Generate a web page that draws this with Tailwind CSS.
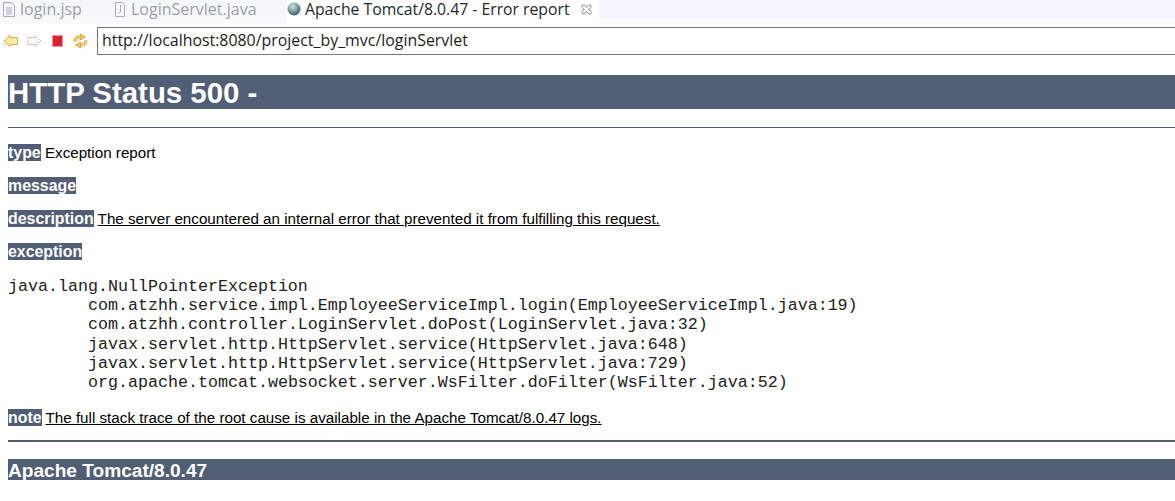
<!DOCTYPE html>
<html lang="en">
<head>
    <meta charset="UTF-8">
    <script src="https://cdn.jsdelivr.net/npm/@tailwindcss/browser@4"></script>
    <title>Apache Tomcat/8.0.47 - Error report</title>
</head>
<body class="bg-white overflow-hidden h-[501px] font-['Liberation_Sans',sans-serif] text-black">
    <!-- editor tabs -->
    <div class="h-[24px] flex bg-[#f9f9fc] font-['Open_Sans',sans-serif] text-[16px] leading-[18px] text-[#9a9fa6]">
        <div class="w-[115px] h-[18px] pl-[3px] flex items-center gap-[5px] bg-[#f5f7fd]">
            <svg width="12" height="15" viewBox="0 0 12 15" fill="none" stroke="#a9adb3"><path d="M.5 .5h8l3 3v11H.5zM3 6h6M3 8h6M3 10h6M3 12h6"/></svg>
            <span>login.jsp</span>
        </div>
        <div class="w-[172px] h-[18px] flex items-center gap-[6px] bg-[#f5f7fd]">
            <svg width="10" height="15" viewBox="0 0 10 15" fill="none" stroke="#a9adb3"><path d="M.5 .5h7l2 2v12h-9zM5.500 3v7l-2 1.500"/></svg>
            <span>LoginServlet.java</span>
        </div>
        <div class="w-[312px] h-[24px] pb-[6px] flex items-center bg-white gap-[4px] text-[#22282e]">
            <svg width="14" height="14" viewBox="0 0 14 14"><defs><radialGradient id="globe" cx=".4" cy=".3" r=".8"><stop offset="0" stop-color="#d5e0e0"/><stop offset=".55" stop-color="#6f9494"/><stop offset="1" stop-color="#2f4f55"/></radialGradient></defs><circle cx="7" cy="7" r="6.500" fill="url(#globe)"/></svg>
            <span class="w-[272px] text-[15.750px] whitespace-nowrap">Apache Tomcat/8.0.47 - Error report</span>
            <svg width="11" height="11" viewBox="0 0 10 10" fill="none" stroke="#a6a6a6"><path d="M1 1l2 0 2 2 2-2 2 0 0 2-2 2 2 2 0 2-2 0-2-2-2 2-2 0 0-2 2-2-2-2z"/></svg>
        </div>
        <div class="flex-1 h-[18px] bg-[#f3f6fe]"></div>
    </div>
    <!-- browser toolbar -->
    <div class="h-[31px] flex items-start pt-[3px] bg-white">
        <div class="w-[97px] h-[27px] flex items-center pl-[3px]">
            <svg width="16" height="14" viewBox="0 0 16 14"><path d="M1 7l6-6v2.500h7.500v7H7V13z" fill="#fbe9a6" stroke="#d9ae45"/></svg>
            <svg class="ml-[8px]" width="15" height="14" viewBox="0 0 15 14"><path d="M14 7L8 1v2.500H.8v7H8V13z" fill="#f6f7f7" stroke="#c6cbce"/></svg>
            <div class="ml-[10px] w-[11px] h-[12px] bg-[#e0212b] border border-[#e39aa0]"></div>
            <svg class="ml-[10px]" width="15" height="16" viewBox="0 0 15 15" fill="none"><path d="M2 8C2 4.500 5 3 8 3.500" stroke="#cf9b32" stroke-width="3.200"/><path d="M2 8C2 4.500 5 3 8 3.500" stroke="#f7d976" stroke-width="1.600"/><path d="M13 7c0 3.500-3 5-6 4.500" stroke="#cf9b32" stroke-width="3.200"/><path d="M13 7c0 3.500-3 5-6 4.500" stroke="#f7d976" stroke-width="1.600"/><path d="M7.500 .5l5 3-5 3zM7.500 8.500l-5 3 5 3z" fill="#f2c85a" stroke="#cf9b32" stroke-width=".7"/></svg>
        </div>
        <div class="h-[28px] flex-1 border border-[#777777] border-r-0 flex items-center pl-[4px] font-['Open_Sans',sans-serif] text-[15.900px] text-[#1c1c1c]">http://localhost:8080/project_by_mvc/loginServlet</div>
    </div>
    <!-- error page -->
    <main class="pl-[8px] pt-[20px]">
        <h1 class="bg-[#525d76] text-white font-bold text-[29.400px] leading-[36px] h-[34px]">HTTP Status 500 -</h1>
        <div class="h-px bg-[#525d76] mt-[18px]"></div>
        <p class="mt-[16px] h-[18px] leading-[18px] text-[15.200px]"><b class="bg-[#525d76] text-white text-[15.900px]">type</b> Exception report</p>
        <p class="mt-[15px] h-[18px] leading-[18px] text-[15.200px]"><b class="bg-[#525d76] text-white text-[15.900px]">message</b></p>
        <p class="mt-[15px] h-[18px] leading-[18px] text-[15.200px]"><b class="bg-[#525d76] text-white text-[15.900px]">description</b> <u>The server encountered an internal error that prevented it from fulfilling this request.</u></p>
        <p class="mt-[15px] h-[18px] leading-[18px] text-[15.200px]"><b class="bg-[#525d76] text-white text-[15.900px]">exception</b></p>
        <pre class="mt-[16px] font-['Liberation_Mono',monospace] text-[16.670px] leading-[19.200px] text-[#222222] [tab-size:8]">java.lang.NullPointerException
	com.atzhh.service.impl.EmployeeServiceImpl.login(EmployeeServiceImpl.java:19)
	com.atzhh.controller.LoginServlet.doPost(LoginServlet.java:32)
	javax.servlet.http.HttpServlet.service(HttpServlet.java:648)
	javax.servlet.http.HttpServlet.service(HttpServlet.java:729)
	org.apache.tomcat.websocket.server.WsFilter.doFilter(WsFilter.java:52)</pre>
        <p class="mt-[17px] h-[18px] leading-[18px] text-[15.200px]"><b class="bg-[#525d76] text-white text-[15.900px]">note</b> <u>The full stack trace of the root cause is available in the Apache Tomcat/8.0.47 logs.</u></p>
        <div class="h-[2px] bg-[#525d76] mt-[13px]"></div>
        <h3 class="bg-[#525d76] text-white font-bold text-[19.100px] leading-[23px] h-[21px] mt-[17px]">Apache Tomcat/8.0.47</h3>
    </main>
</body>
</html>
